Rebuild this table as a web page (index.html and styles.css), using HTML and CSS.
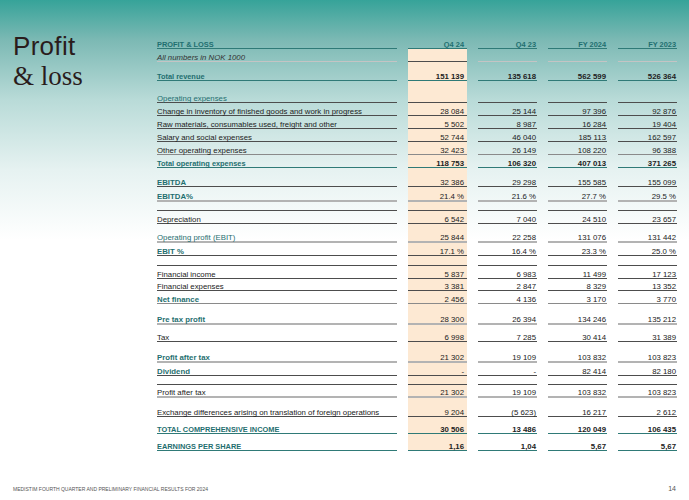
FILE: index.html
```html
<!DOCTYPE html>
<html>
<head>
<meta charset="utf-8">
<link rel="stylesheet" href="styles.css">
</head>
<body>
<div class="page">
  <div class="main">
    <h1 class="title"><span class="t1">Profit</span><span class="t2">&amp; loss</span></h1>
    <div class="table">
      <div class="row hdr b-teal"><div>PROFIT &amp; LOSS</div><div class="hl">Q4 24</div><div>Q4 23</div><div>FY 2024</div><div>FY 2023</div></div>
      <div class="row note b-faint"><div>All numbers in NOK 1000</div><div class="hl dk"></div><div></div><div></div><div></div></div>
      <div class="row h19 b-teal key bnum"><div>Total revenue</div><div class="hl">151 139</div><div>135 618</div><div>562 599</div><div>526 364</div></div>
      <div class="row h22 b-dark sub"><div>Operating expenses</div><div class="hl"></div><div></div><div></div><div></div></div>
      <div class="row b-dark"><div>Change in inventory of finished goods and work in progress</div><div class="hl">28 084</div><div>25 144</div><div>97 396</div><div>92 876</div></div>
      <div class="row b-dark"><div>Raw materials, consumables used, freight and other</div><div class="hl">5 502</div><div>8 987</div><div>16 284</div><div>19 404</div></div>
      <div class="row b-dark"><div>Salary and social expenses</div><div class="hl">52 744</div><div>46 040</div><div>185 113</div><div>162 597</div></div>
      <div class="row b-mid"><div>Other operating expenses</div><div class="hl">32 423</div><div>26 149</div><div>108 220</div><div>96 388</div></div>
      <div class="row b-teal key bnum"><div>Total operating expenses</div><div class="hl">118 753</div><div>106 320</div><div>407 013</div><div>371 265</div></div>
      <div class="row h19 b-dark key"><div>EBITDA</div><div class="hl">32 386</div><div>29 298</div><div>155 585</div><div>155 099</div></div>
      <div class="row h15 b-light key"><div>EBITDA%</div><div class="hl">21.4 %</div><div>21.6 %</div><div>27.7 %</div><div>29.5 %</div></div>
      <div class="row h9 b-dark"><div></div><div class="hl"></div><div></div><div></div><div></div></div>
      <div class="row b-dark"><div>Depreciation</div><div class="hl">6 542</div><div>7 040</div><div>24 510</div><div>23 657</div></div>
      <div class="row h19 b-light sub"><div>Operating profit (EBIT)</div><div class="hl">25 844</div><div>22 258</div><div>131 076</div><div>131 442</div></div>
      <div class="row b-dark key"><div>EBIT %</div><div class="hl">17.1 %</div><div>16.4 %</div><div>23.3 %</div><div>25.0 %</div></div>
      <div class="row h10 b-dark"><div></div><div class="hl"></div><div></div><div></div><div></div></div>
      <div class="row b-dark"><div>Financial income</div><div class="hl">5 837</div><div>6 983</div><div>11 499</div><div>17 123</div></div>
      <div class="row h12 b-dark"><div>Financial expenses</div><div class="hl">3 381</div><div>2 847</div><div>8 329</div><div>13 352</div></div>
      <div class="row b-mid key"><div>Net finance</div><div class="hl">2 456</div><div>4 136</div><div>3 170</div><div>3 770</div></div>
      <div class="row h21 b-light key"><div>Pre tax profit</div><div class="hl">28 300</div><div>26 394</div><div>134 246</div><div>135 212</div></div>
      <div class="row h17 b-dark"><div>Tax</div><div class="hl">6 998</div><div>7 285</div><div>30 414</div><div>31 389</div></div>
      <div class="row h21 b-light key"><div>Profit after tax</div><div class="hl">21 302</div><div>19 109</div><div>103 832</div><div>103 823</div></div>
      <div class="row b-dark key"><div>Dividend</div><div class="hl">-</div><div>-</div><div>82 414</div><div>82 180</div></div>
      <div class="row h9 b-dark"><div></div><div class="hl"></div><div></div><div></div><div></div></div>
      <div class="row b-light"><div>Profit after tax</div><div class="hl">21 302</div><div>19 109</div><div>103 832</div><div>103 823</div></div>
      <div class="row h19 b-dark"><div>Exchange differences arising on translation of foreign operations</div><div class="hl">9 204</div><div>(5 623)</div><div>16 217</div><div>2 612</div></div>
      <div class="row h17 b-teal key bnum"><div>TOTAL COMPREHENSIVE INCOME</div><div class="hl">30 506</div><div>13 486</div><div>120 049</div><div>106 435</div></div>
      <div class="row h17 b-teal key bnum"><div>EARNINGS PER SHARE</div><div class="hl">1,16</div><div>1,04</div><div>5,67</div><div>5,67</div></div>
    </div>
  </div>
  <footer class="footer">
    <span class="foot-text">MEDISTIM FOURTH QUARTER AND PRELIMINARY FINANCIAL RESULTS FOR 2024</span>
    <span class="foot-num">14</span>
  </footer>
</div>
</body>
</html>
```

FILE: styles.css
```css
html, body {
  margin: 0;
  padding: 0;
}
body {
  width: 689px;
  height: 500px;
  overflow: hidden;
  background: linear-gradient(180deg, #36a399 0px, #7cb9b4 40px, #b9dbd8 100px, #e6f2f1 170px, #ffffff 240px);
  font-family: "Liberation Sans", Arial, sans-serif;
  color: #222;
}
.page {
  height: 500px;
  display: flex;
  flex-direction: column;
  box-sizing: border-box;
  padding: 0 11px 0 13px;
}
.main {
  display: flex;
  align-items: flex-start;
  padding-top: 31px;
}
.title {
  margin: 0;
  width: 144px;
  flex: none;
  display: flex;
  flex-direction: column;
  font-weight: normal;
  font-size: 26px;
  line-height: 30px;
  color: #2a1c1c;
}
.t1 {
  font-family: "Liberation Sans", Arial, sans-serif;
  letter-spacing: 0.3px;
}
.t2 {
  font-family: "Liberation Serif", "Times New Roman", serif;
  font-size: 27px;
}
.table {
  margin-top: 5px;
  width: 517px;
  font-size: 7.8px;
}
.row {
  display: grid;
  grid-template-columns: 240px 59px 59px 59px 59px;
  column-gap: 11px;
  height: 13px;
}
.row > div {
  box-sizing: border-box;
  display: flex;
  align-items: flex-end;
  justify-content: flex-end;
  line-height: 7px;
  padding-right: 1px;
  white-space: nowrap;
  border-bottom: 1px solid #4d4d4d;
}
.row > div:first-child {
  justify-content: flex-start;
  padding-right: 0;
}
.row > .hl {
  background: #fde9d3;
  padding-right: 3px;
}
.h9 { height: 9px; }
.h10 { height: 10px; }
.h12 { height: 12px; }
.h15 { height: 15px; }
.h17 { height: 17px; }
.h19 { height: 19px; }
.h21 { height: 21px; }
.h22 { height: 22px; }

.b-dark > div { border-bottom: 1px solid #4d4d4d; }
.b-mid > div { border-bottom: 1px solid #8a8a8a; }
.b-light > div { border-bottom: 2px solid #b3b3b3; }
.b-faint > div { border-bottom: 1px solid #c4c4c4; }
.b-teal > div { border-bottom: 1.5px solid #2f7a77; }
.b-faint > .dk { border-bottom: 1px solid #4d4d4d; }

.hdr > div {
  color: #1f6f70;
  font-weight: bold;
  font-size: 7.4px;
}
.hdr > .hl {
  background: transparent;
}
.note > div:first-child {
  font-style: italic;
  color: #333;
}
.key > div:first-child {
  color: #1f6f70;
  font-weight: bold;
}
.sub > div:first-child {
  color: #1f6f70;
}
.bnum > div {
  font-weight: bold;
}
.bnum > div:first-child {
  font-size: 7.4px;
}

.footer {
  margin-top: auto;
  height: 15px;
  display: flex;
  justify-content: space-between;
  align-items: flex-start;
  padding-right: 2px;
  color: #555;
}
.foot-text {
  font-family: "Liberation Sans", sans-serif;
  font-size: 5px;
  line-height: 8px;
}
.foot-num {
  font-size: 7px;
  line-height: 8px;
}
```
